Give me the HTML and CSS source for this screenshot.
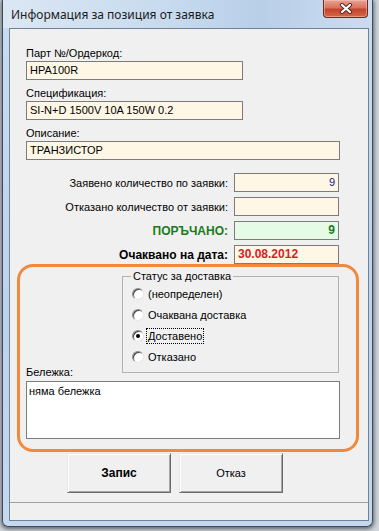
FILE: index.html
```html
<!DOCTYPE html>
<html lang="bg">
<head>
  <meta charset="UTF-8" />
  <title>Информация за позиция от заявка</title>
  <link rel="stylesheet" href="styles.css">
</head>
<body>
  <div class="window">
    <div class="titlebar">
      <span class="title">Информация за позиция от заявка</span>
      <div class="close">
        <svg width="14" height="11" viewBox="0 0 14 11">
          <path d="M3 2 L11 9 M11 2 L3 9" stroke="#5a2a22" stroke-width="4.2" stroke-linecap="round"/>
          <path d="M3 2 L11 9 M11 2 L3 9" stroke="#ffffff" stroke-width="2.2" stroke-linecap="round"/>
        </svg>
      </div>
    </div>

    <div class="client">
      <div class="fields">
        <div class="label">Парт №/Ордеркод:</div>
        <div class="edit edit-short">HPA100R</div>
        <div class="label">Спецификация:</div>
        <div class="edit edit-short">SI-N+D 1500V 10A 150W 0.2</div>
        <div class="label">Описание:</div>
        <div class="edit edit-long">ТРАНЗИСТОР</div>
      </div>

      <div class="rows">
        <div class="row">
          <span class="row-label">Заявено количество по заявки:</span>
          <div class="edit qty">9</div>
        </div>
        <div class="row">
          <span class="row-label">Отказано количество от заявки:</span>
          <div class="edit qty"></div>
        </div>
        <div class="row">
          <span class="row-label ordered">ПОРЪЧАНО:</span>
          <div class="edit qty qty-ordered">9</div>
        </div>
        <div class="row">
          <span class="row-label expected">Очаквано на дата:</span>
          <div class="edit date">30.08.2012</div>
        </div>
      </div>

      <div class="highlight">
        <div class="status-area">
          <span class="note-label">Бележка:</span>
          <fieldset class="group">
            <legend>Статус за доставка</legend>
            <div class="radio-row"><span class="radio"></span><span>(неопределен)</span></div>
            <div class="radio-row"><span class="radio"></span><span>Очаквана доставка</span></div>
            <div class="radio-row"><span class="radio checked"></span><span class="focused">Доставено</span></div>
            <div class="radio-row"><span class="radio"></span><span>Отказано</span></div>
          </fieldset>
        </div>
        <div class="note">няма бележка</div>
      </div>

      <div class="buttons">
        <div class="btn btn-default">Запис</div>
        <div class="btn">Отказ</div>
      </div>

      <div class="statusbar"></div>
    </div>
  </div>
</body>
</html>
```

FILE: styles.css
```css
* {
  box-sizing: border-box;
}

body {
  margin: 0;
  height: 531px;
  overflow: hidden;
  background: #cfd5dc;
  font-family: 'Liberation Sans', Arial, sans-serif;
  font-size: 11px;
  color: #000;
}

.window {
  margin-left: 2px;
  width: 371px;
  height: 527px;
  padding: 0 3px 5px 6px;
  background: linear-gradient(to bottom, #c9dcf0, #bcd3ec 60%, #c4d8ee);
  border: 1px solid #3d4c5d;
  border-top: none;
  border-radius: 0 0 6px 6px;
  box-shadow: 0 1px 4px 1px rgba(0, 0, 0, 0.55);
}

.titlebar {
  height: 28px;
  display: flex;
  justify-content: space-between;
  align-items: flex-start;
  margin-left: -6px;
  margin-right: -3px;
  padding-left: 8px;
  padding-right: 4px;
  background: linear-gradient(to right, #dbe7f3, #c7daee 45%, #b9cfe8 70%, #cadcf0);
}

.title {
  font-family: 'Noto Sans', sans-serif;
  font-size: 12px;
  line-height: 16px;
  padding-top: 7px;
  color: #1b1b1b;
}

.close {
  width: 45px;
  height: 18px;
  display: flex;
  align-items: center;
  justify-content: center;
  background: linear-gradient(to bottom, #e7a393, #d9735e 45%, #c4432a 55%, #d4684a);
  border: 1px solid #6e2a1e;
  border-top: none;
  border-radius: 0 0 4px 4px;
  box-shadow: inset 0 0 0 1px rgba(255, 210, 200, 0.45);
}

.client {
  height: 493px;
  background: #f0f0f0;
  border: 1px solid #6f8297;
}

.fields {
  padding: 18px 0 0 16px;
}

.label {
  line-height: 13px;
  height: 13px;
  margin-bottom: 1px;
}

.edit {
  height: 19px;
  line-height: 17px;
  padding: 0 3px;
  background: #fef7e6;
  border: 1px solid #7c7c7c;
  white-space: nowrap;
  overflow: hidden;
}

.edit-short {
  width: 217px;
  margin-bottom: 7px;
}

.edit-long {
  width: 314px;
}

.rows {
  margin-top: 13px;
  padding-left: 16px;
}

.row {
  display: flex;
  align-items: center;
  gap: 6px;
  margin-bottom: 5px;
}

.row:last-child {
  margin-bottom: 0;
}

.row-label {
  flex: 0 0 202px;
  text-align: right;
}

.qty {
  width: 105px;
  text-align: right;
  color: #15158a;
}

.ordered {
  font-weight: bold;
  font-size: 12px;
  color: #1c7a1c;
}

.qty-ordered {
  background: #e5fbe5;
  font-weight: bold;
  font-size: 12px;
  color: #1c7a1c;
}

.expected {
  font-weight: bold;
  font-size: 12px;
}

.date {
  width: 105px;
  font-weight: bold;
  font-size: 12px;
  color: #d61f1f;
}

.highlight {
  margin-left: 7px;
  width: 342px;
  height: 188px;
  padding-bottom: 10px;
  border: 3px solid #f0893d;
  border-radius: 16px;
}

.status-area {
  display: flex;
  margin-top: 3px;
}

.note-label {
  flex: 1;
  align-self: flex-end;
  margin-bottom: -6px;
  padding-left: 6px;
  line-height: 13px;
}

.group {
  width: 217px;
  margin: 0 17px 0 0;
  padding: 0 0 5px 0;
  border: 1px solid #b3b3b3;
  min-inline-size: 0;
}

.group legend {
  margin-left: 8px;
  padding: 0 2px;
  line-height: 13px;
}

.radio-row {
  height: 21px;
  display: flex;
  align-items: center;
  gap: 4px;
  padding-left: 9px;
}

.radio {
  width: 12px;
  height: 12px;
  border-radius: 50%;
  background: #fff;
  border: 1px solid;
  border-color: #8a8a8a #e6e6e6 #e6e6e6 #8a8a8a;
  box-shadow: inset 1px 1px 0 #444;
  position: relative;
}

.radio.checked::after {
  content: '';
  position: absolute;
  left: 3px;
  top: 3px;
  width: 4px;
  height: 4px;
  border-radius: 50%;
  background: #000;
}

.focused {
  outline: 1px dotted #000;
  outline-offset: 1px;
}

.note {
  margin: 8px 0 0 6px;
  width: 314px;
  height: 58px;
  padding: 3px 2px;
  background: #fff;
  border: 1px solid #7c7c7c;
  line-height: 13px;
}

.buttons {
  display: flex;
  gap: 8px;
  margin: 1px 0 0 57px;
}

.btn {
  width: 104px;
  height: 40px;
  display: flex;
  align-items: center;
  justify-content: center;
  background: #f0f0f0;
  border: 1px solid;
  border-color: #e8e8e8 #6a6a6a #6a6a6a #e8e8e8;
  box-shadow: inset 1px 1px 0 #fff, inset -1px -1px 0 #a5a5a5;
}

.btn-default {
  font-weight: bold;
  font-size: 12px;
}

.statusbar {
  margin-top: 9px;
  height: 18px;
  border-top: 1px solid #a0a0a0;
}
```
